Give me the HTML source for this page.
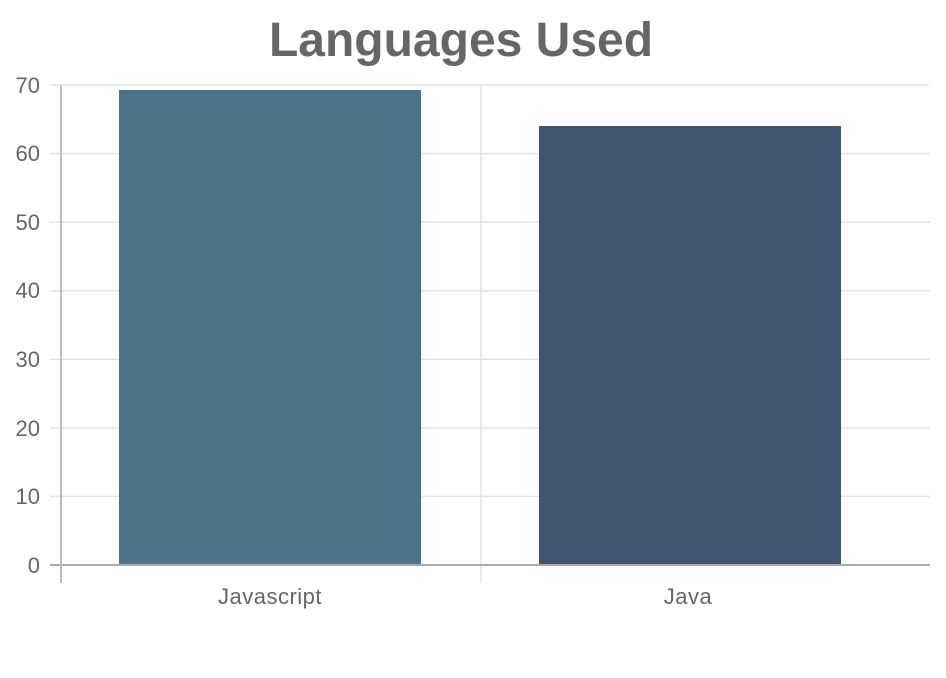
<!DOCTYPE html>
<html><head><meta charset="utf-8"><style>
html,body{margin:0;padding:0;background:#fff;width:946px;height:678px;overflow:hidden}
svg text{font-family:"Liberation Sans",sans-serif;fill:#666}
</style></head><body>
<svg width="946" height="678" viewBox="0 0 946 678">
<text x="461" y="56" font-size="48" font-weight="bold" text-anchor="middle">Languages Used</text>
<g stroke="#e3e3e3" stroke-width="1.5">
<line x1="50" y1="85" x2="930" y2="85"/>
<line x1="50" y1="153.6" x2="930" y2="153.6"/>
<line x1="50" y1="222.1" x2="930" y2="222.1"/>
<line x1="50" y1="290.7" x2="930" y2="290.7"/>
<line x1="50" y1="359.3" x2="930" y2="359.3"/>
<line x1="50" y1="427.9" x2="930" y2="427.9"/>
<line x1="50" y1="496.4" x2="930" y2="496.4"/>
<line x1="481" y1="85" x2="481" y2="583"/>
</g>
<rect x="119" y="90" width="302" height="475" fill="#4c7389"/>
<rect x="539" y="126" width="302" height="439" fill="#415471"/>
<line x1="50" y1="565" x2="930" y2="565" stroke="#aaa" stroke-width="2"/>
<line x1="61" y1="85" x2="61" y2="583" stroke="#bbb" stroke-width="2"/>
<g font-size="22" text-anchor="end">
<text x="40" y="93">70</text>
<text x="40" y="161">60</text>
<text x="40" y="230">50</text>
<text x="40" y="298">40</text>
<text x="40" y="367">30</text>
<text x="40" y="436">20</text>
<text x="40" y="504">10</text>
<text x="40" y="573">0</text>
</g>
<g font-size="22" text-anchor="middle" letter-spacing="0.5">
<text x="270" y="604">Javascript</text>
<text x="688" y="604">Java</text>
</g>
</svg>
</body></html>
